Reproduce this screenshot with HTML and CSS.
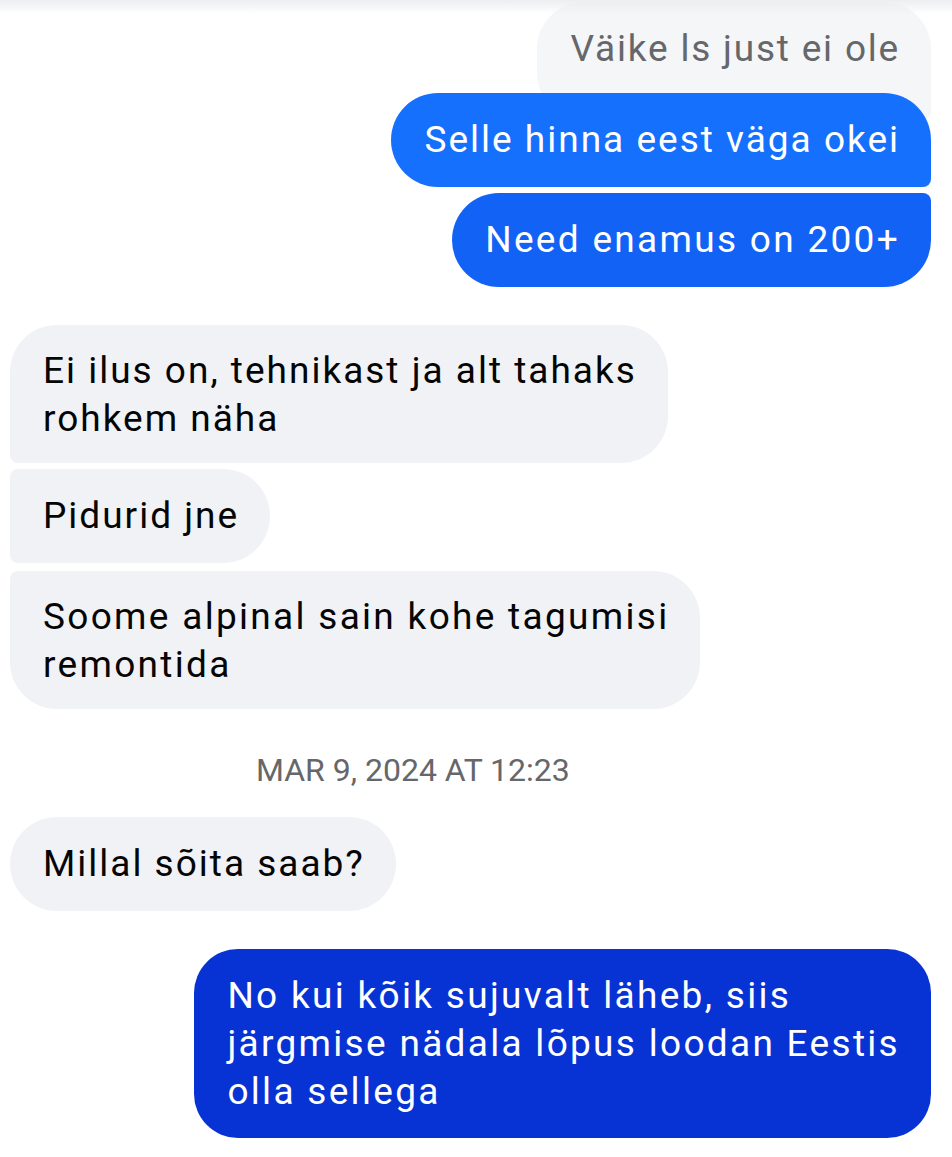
FILE: index.html
```html
<!DOCTYPE html>
<html lang="et">
<head>
<meta charset="utf-8">
<link rel="stylesheet" href="styles.css">
</head>
<body>
<div class="chat">
  <div class="fade"></div>
  <div class="row out">
    <div class="quote">Väike ls just ei ole</div>
  </div>
  <div class="row out over">
    <div class="bubble blue1 first-out">Selle hinna eest väga okei</div>
  </div>
  <div class="row out g6">
    <div class="bubble blue2 last-out wide">Need enamus on 200+</div>
  </div>

  <div class="row in group">
    <div class="bubble gray first-in two">Ei ilus on, tehnikast ja alt tahaks<br>rohkem näha</div>
  </div>
  <div class="row in g6">
    <div class="bubble gray mid-in">Pidurid jne</div>
  </div>
  <div class="row in g8">
    <div class="bubble gray last-in two wide">Soome alpinal sain kohe tagumisi<br>remontida</div>
  </div>

  <div class="stamp">MAR 9, 2024 AT 12:23</div>

  <div class="row in">
    <div class="bubble gray single">Millal sõita saab?</div>
  </div>

  <div class="row out group2">
    <div class="bubble blue3 single big wide">No kui kõik sujuvalt läheb, siis<br>järgmise nädala lõpus loodan Eestis<br>olla sellega</div>
  </div>
</div>
</body>
</html>
```

FILE: styles.css
```css
html, body {
  margin: 0;
  padding: 0;
  background: #ffffff;
}

body {
  font-family: Roboto, "Noto Sans", "Liberation Sans", sans-serif;
  width: 952px;
  height: 1157px;
  overflow: hidden;
}

.chat {
  position: relative;
  display: flex;
  flex-direction: column;
  padding: 2px 21px 0 10px;
}

.fade {
  position: absolute;
  left: 0;
  right: 0;
  top: 0;
  height: 14px;
  background: linear-gradient(to bottom, rgba(235,236,238,0.9), rgba(255,255,255,0));
  z-index: 5;
}

.row {
  display: flex;
}

.row.out { justify-content: flex-end; }
.row.in { justify-content: flex-start; }

.g6 { margin-top: 6px; }
.g8 { margin-top: 8px; }
.group { margin-top: 38px; }
.group2 { margin-top: 38px; }

.over {
  margin-top: -27px;
  position: relative;
  z-index: 2;
}

.quote {
  background: #f5f6f8;
  color: #65676b;
  font-size: 37px;
  letter-spacing: 1.8px;
  line-height: 48px;
  padding: 23px 31px 47px 34px;
  border-radius: 47px 47px 8px 47px;
}

.bubble {
  font-size: 37px;
  letter-spacing: 2px;
  line-height: 48px;
  padding: 23px 31px 23px 33px;
  white-space: nowrap;
}

.bubble.wide {
  letter-spacing: 2.3px;
}

.bubble.two {
  padding-top: 22px;
  padding-bottom: 20px;
}

.blue1 {
  background: #1670fe;
  color: #fff;
}

.blue2 {
  background: #1262f5;
  color: #fff;
}

.blue3 {
  background: #0732d4;
  color: #fff;
}

.gray {
  background: #f1f2f6;
  color: #050505;
}

.first-out { border-radius: 47px 47px 8px 47px; }
.last-out { border-radius: 47px 8px 47px 47px; }

.first-in { border-radius: 47px 47px 47px 8px; }
.mid-in { border-radius: 8px 47px 47px 8px; }
.last-in { border-radius: 8px 47px 47px 47px; }

.single { border-radius: 47px; }
.big { border-radius: 44px; padding-top: 23px; padding-bottom: 22px; }

.stamp {
  align-self: flex-start;
  margin: 38px 0 24px 246px;
  color: #65676b;
  font-size: 32px;
  line-height: 46px;
}
```
